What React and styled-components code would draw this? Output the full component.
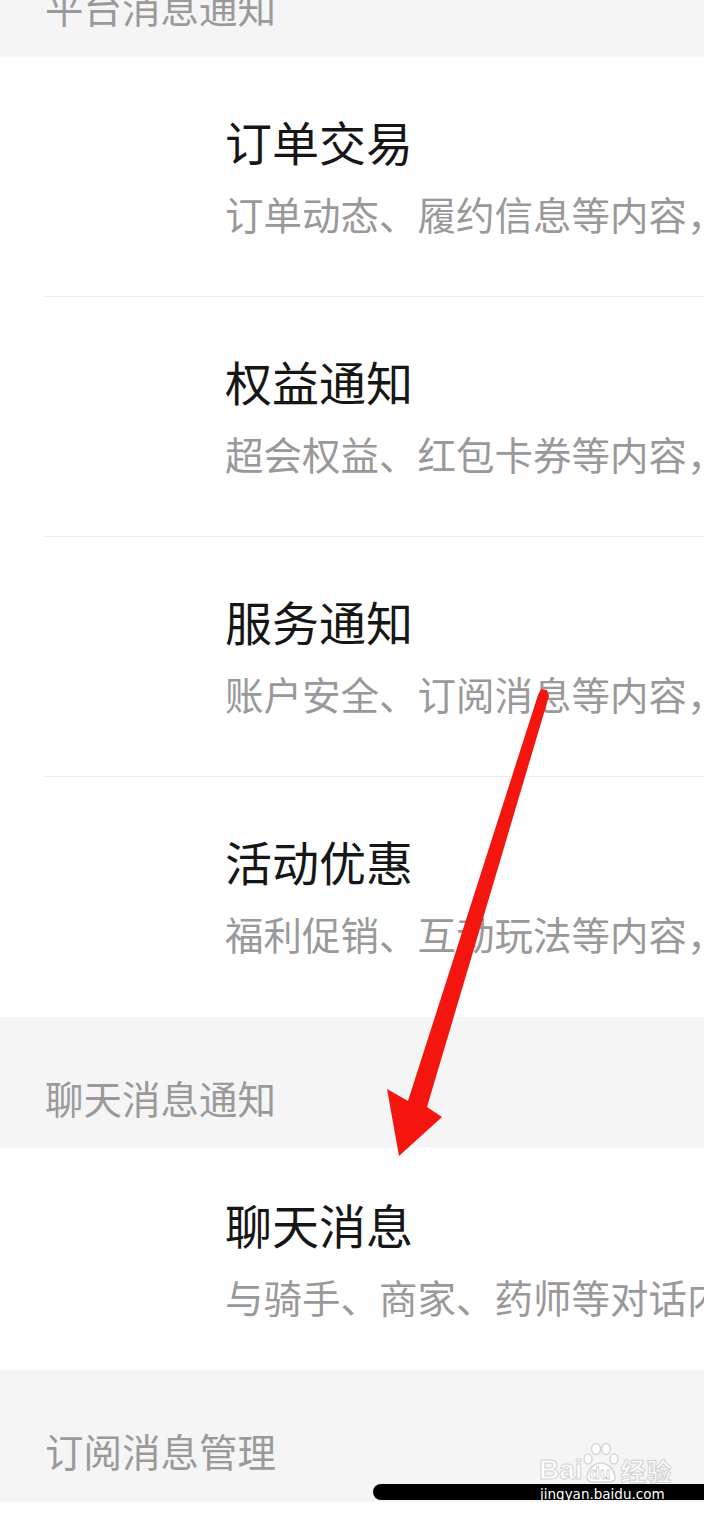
import React from 'react'
import styled, { createGlobalStyle } from 'styled-components'

const GlobalStyle = createGlobalStyle`
  html, body {
    margin: 0;
    padding: 0;
    background: #fff;
  }
  body {
    font-family: "Noto Sans CJK SC", "Noto Sans", sans-serif;
    overflow: hidden;
  }
`

const sections = [
  {
    title: '平台消息通知',
    first: true,
    items: [
      { title: '订单交易', desc: '订单动态、履约信息等内容，' },
      { title: '权益通知', desc: '超会权益、红包卡券等内容，' },
      { title: '服务通知', desc: '账户安全、订阅消息等内容，' },
      { title: '活动优惠', desc: '福利促销、互动玩法等内容，' },
    ],
  },
  {
    title: '聊天消息通知',
    compact: true,
    items: [{ title: '聊天消息', desc: '与骑手、商家、药师等对话内容' }],
  },
]

function App() {
  return (
    <Page>
      <GlobalStyle />
      {sections.map((section) => (
        <React.Fragment key={section.title}>
          <SectionHeader $first={section.first}>
            <HeaderText>{section.title}</HeaderText>
          </SectionHeader>
          <List>
            {section.items.map((item) => (
              <Row key={item.title} $compact={section.compact}>
                <IconSlot />
                <RowBody>
                  <RowTitle>{item.title}</RowTitle>
                  <RowDesc>{item.desc}</RowDesc>
                </RowBody>
              </Row>
            ))}
          </List>
        </React.Fragment>
      ))}
      <BottomSection>
        <HeaderText>订阅消息管理</HeaderText>
        <Watermark>
          <BrandText>Bai</BrandText>
          <PawBox>
            <PawIcon />
            <PawText>du</PawText>
          </PawBox>
          <BrandText $cjk>经验</BrandText>
        </Watermark>
        <HomeBar>
          <HomeBarText>jingyan.baidu.com</HomeBarText>
        </HomeBar>
      </BottomSection>
      <BottomStrip />
      <ArrowOverlay viewBox='0 0 704 1519'>
        <polygon
          points='538,695 541,689 547,690 549,696 427,1107 442,1117 399,1156 387,1089 408,1101'
          fill='#f5150f'
        />
      </ArrowOverlay>
    </Page>
  )
}

function PawIcon() {
  return (
    <svg width='36' height='42' viewBox='0 0 36 42'>
      <g fill='#fff' stroke='#d6d6d6' strokeWidth='1.5'>
        <ellipse cx='5' cy='17' rx='4' ry='5' />
        <ellipse cx='13' cy='7' rx='4.5' ry='5.5' />
        <ellipse cx='23' cy='7' rx='4.5' ry='5.5' />
        <ellipse cx='31' cy='17' rx='4' ry='5' />
        <path d='M4 36 C4 27 12 21 18 21 C24 21 32 27 32 36 C32 41 25 40 18 40 C11 40 4 41 4 36 Z' />
      </g>
    </svg>
  )
}

const Page = styled.div`
  position: relative;
  width: 704px;
  height: 1519px;
  overflow: hidden;
  background: #fff;
`

const SectionHeader = styled.div`
  display: flex;
  align-items: flex-start;
  height: 131px;
  box-sizing: border-box;
  padding: 58px 0 0 45px;
  margin-top: ${(p) => (p.$first ? '-74px' : '0')};
  background: #f5f5f5;
`

const HeaderText = styled.div`
  font-size: 38.5px;
  line-height: 44px;
  color: #9a9a9a;
  white-space: nowrap;
`

const List = styled.div`
  display: flex;
  flex-direction: column;
  padding-left: 44px;
  background: #fff;
`

const Row = styled.div`
  display: flex;
  align-items: flex-start;
  height: ${(p) => (p.$compact ? '222px' : '240px')};
  box-sizing: border-box;
  padding-top: ${(p) => (p.$compact ? '48px' : '56px')};
  border-bottom: 1px solid #ececec;

  &:last-child {
    border-bottom: none;
  }
`

const IconSlot = styled.div`
  width: 181px;
  flex-shrink: 0;
`

const RowBody = styled.div`
  display: flex;
  flex-direction: column;
  gap: 19px;
  white-space: nowrap;
`

const RowTitle = styled.div`
  font-size: 47px;
  line-height: 56px;
  color: #161616;
`

const RowDesc = styled.div`
  font-size: 38.5px;
  line-height: 50px;
  color: #999;
`

const BottomSection = styled.div`
  position: relative;
  height: 132px;
  box-sizing: border-box;
  padding: 58px 0 0 45px;
  background: #f5f5f5;
`

const BottomStrip = styled.div`
  height: 20px;
  background: #fff;
`

const HomeBar = styled.div`
  position: absolute;
  left: 373px;
  right: 0;
  bottom: 2px;
  height: 16px;
  border-radius: 8px 0 0 8px;
  background: #000;
  display: flex;
  align-items: center;
  padding-left: 167px;
`

const HomeBarText = styled.span`
  font-family: "DejaVu Sans", sans-serif;
  font-size: 13.5px;
  line-height: 16px;
  color: #fff;
  margin-top: 3px;
`

const Watermark = styled.div`
  position: absolute;
  left: 539px;
  bottom: 18px;
  display: flex;
  align-items: flex-end;
`

const BrandText = styled.span`
  font-family: ${(p) => (p.$cjk ? '"Noto Sans CJK SC", sans-serif' : '"Liberation Sans", sans-serif')};
  font-weight: bold;
  font-size: ${(p) => (p.$cjk ? '25px' : '28px')};
  line-height: 28px;
  color: #fff;
  -webkit-text-stroke: 1px #d2d2d2;
  margin-left: ${(p) => (p.$cjk ? '2px' : '0')};
  letter-spacing: ${(p) => (p.$cjk ? '1px' : '0')};
`

const PawBox = styled.div`
  position: relative;
  width: 36px;
  height: 42px;
  display: flex;
`

const PawText = styled.span`
  position: absolute;
  left: 7px;
  bottom: 1px;
  font-family: "Liberation Sans", sans-serif;
  font-weight: bold;
  font-size: 17px;
  line-height: 18px;
  color: #fff;
  -webkit-text-stroke: 0.8px #cfcfcf;
`

const ArrowOverlay = styled.svg`
  position: absolute;
  left: 0;
  top: 0;
  width: 704px;
  height: 1519px;
  pointer-events: none;
`

export default App
